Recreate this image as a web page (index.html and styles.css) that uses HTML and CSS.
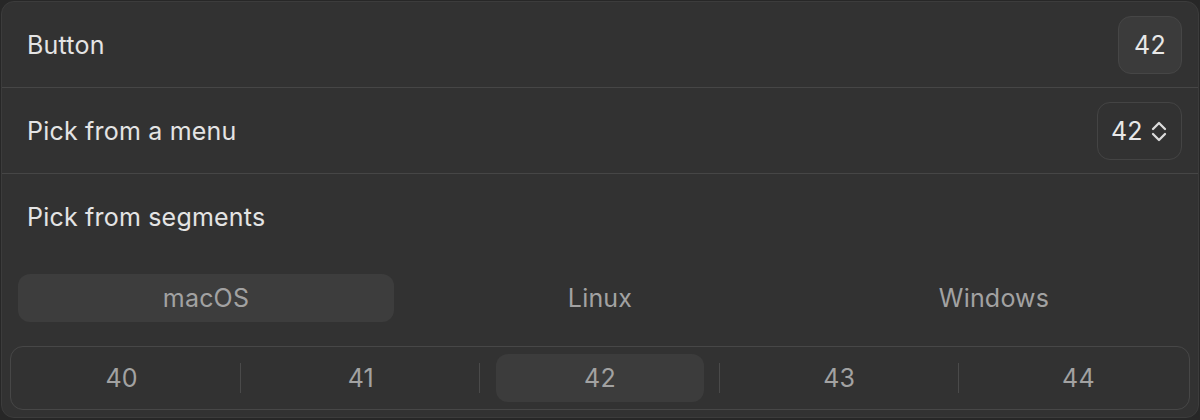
FILE: index.html
```html
<!DOCTYPE html>
<html>
<head>
<meta charset="utf-8">
<link rel="stylesheet" href="styles.css">
</head>
<body>
<div class="panel">
  <div class="row">
    <span class="label">Button</span>
    <div class="btn">42</div>
  </div>
  <div class="row">
    <span class="label">Pick from a menu</span>
    <div class="menu">
      <span>42</span>
      <svg class="chev" width="16" height="22" viewBox="0 0 16 22" aria-hidden="true">
        <polyline points="2,9 8,3 14,9" fill="none" stroke="#dcdcdc" stroke-width="2.3" stroke-linecap="round" stroke-linejoin="round"/>
        <polyline points="2,14 8,20 14,14" fill="none" stroke="#dcdcdc" stroke-width="2.3" stroke-linecap="round" stroke-linejoin="round"/>
      </svg>
    </div>
  </div>
  <div class="seg-row">
    <div class="label seg-label">Pick from segments</div>
    <div class="tabs">
      <div class="tab active">macOS</div>
      <div class="tab">Linux</div>
      <div class="tab">Windows</div>
    </div>
    <div class="segbox">
      <div class="segs">
        <div class="seg"><span class="segtxt">40</span></div>
        <div class="seg"><span class="segtxt">41</span></div>
        <div class="seg"><span class="segtxt sel">42</span></div>
        <div class="seg"><span class="segtxt">43</span></div>
        <div class="seg last"><span class="segtxt">44</span></div>
      </div>
    </div>
  </div>
</div>
</body>
</html>
```
FILE: styles.css
```css
* { box-sizing: border-box; }
html, body { margin: 0; }
body {
  background: #272727;
  padding: 1px;
  width: 1200px;
  height: 420px;
  font-family: Inter, "Noto Sans", sans-serif;
  font-size: 25px;
  letter-spacing: 0.2px;
  overflow: hidden;
}
.panel {
  height: 417px;
  border: 1px solid #3c3c3c;
  border-radius: 13px;
  background: #323232;
  display: flex;
  flex-direction: column;
}
.row {
  height: 86px;
  border-bottom: 1px solid #464646;
  display: flex;
  align-items: center;
  justify-content: space-between;
  padding: 0 16px 0 25px;
}
.label {
  color: #e4e4e4;
  line-height: 30px;
}
.btn {
  width: 64px;
  height: 58px;
  border: 1px solid #464646;
  border-radius: 13px;
  background: #3b3b3b;
  color: #e8e8e8;
  display: flex;
  align-items: center;
  justify-content: center;
}
.menu {
  width: 85px;
  height: 58px;
  border: 1px solid #444444;
  border-radius: 13px;
  color: #e8e8e8;
  display: flex;
  align-items: center;
  padding-left: 13px;
  gap: 8px;
}
.chev { display: block; }
.seg-row {
  flex: 1;
  display: flex;
  flex-direction: column;
  padding-top: 28px;
}
.seg-label { padding-left: 25px; }
.tabs {
  margin-top: 42px;
  padding: 0 16px;
  display: grid;
  grid-template-columns: repeat(3, 1fr);
  gap: 18px;
}
.tab {
  height: 48px;
  border-radius: 12px;
  display: flex;
  align-items: center;
  justify-content: center;
  color: #a2a2a2;
}
.tab.active { background: #3d3d3d; }
.segbox {
  margin: 24px 8px 0;
  height: 64px;
  border: 1px solid #474747;
  border-radius: 13px;
  padding: 7px 0;
}
.segs {
  margin: 0 -9px;
  height: 48px;
  display: grid;
  grid-template-columns: repeat(5, 1fr);
}
.seg {
  position: relative;
  padding: 0 16px;
  display: flex;
}
.seg::after {
  content: "";
  position: absolute;
  right: 0;
  top: 9px;
  width: 1px;
  height: 30px;
  background: #4a4a4a;
}
.seg.last::after { display: none; }
.segtxt {
  flex: 1;
  display: flex;
  align-items: center;
  justify-content: center;
  color: #a2a2a2;
  border-radius: 12px;
}
.segtxt.sel { background: #3c3c3c; }
```
